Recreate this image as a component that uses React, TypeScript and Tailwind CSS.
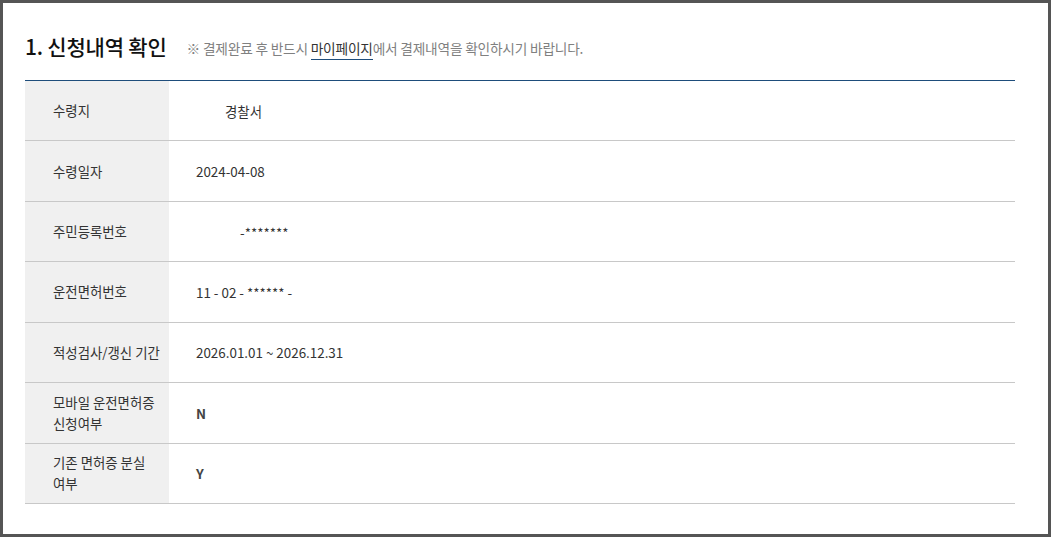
import React from "react";

const rows: { label: React.ReactNode; value: React.ReactNode; valueClass?: string }[] = [
  { label: "수령지", value: <span className="pl-[29px]">경찰서</span> },
  { label: "수령일자", value: "2024-04-08" },
  { label: "주민등록번호", value: <span className="pl-[44px]">-*******</span> },
  { label: "운전면허번호", value: "11 - 02 - ****** -" },
  { label: "적성검사/갱신 기간", value: "2026.01.01 ~ 2026.12.31" },
  {
    label: (
      <>
        모바일 운전면허증
        <br />
        신청여부
      </>
    ),
    value: "N",
    valueClass: "font-bold text-[#444]",
  },
  {
    label: (
      <>
        기존 면허증 분실
        <br />
        여부
      </>
    ),
    value: "Y",
    valueClass: "font-bold text-[#444]",
  },
];

export default function App() {
  return (
    <div
      className="w-[1051px] h-[537px] bg-[#555555] pt-[3px] pl-[3px] pr-[3px] pb-[3px]"
      style={{ fontFamily: '"Noto Sans CJK KR", "Noto Sans", sans-serif' }}
    >
      <div className="w-full h-full bg-white pl-[22px] pr-[33px] pt-[26px]">
        <div className="flex items-end h-[32px]">
          <h2 className="text-[21px] leading-[30px] text-[#111] font-medium tracking-[-0.2px]">
            1. 신청내역 확인
          </h2>
          <p className="ml-[20px] mb-[3px] text-[13.7px] leading-[20px] text-[#808080] tracking-[-0.2px]">
            ※ 결제완료 후 반드시{" "}
            <span className="text-[#333] border-b border-[#1e4d7b] pb-[1px]">마이페이지</span>
            에서 결제내역을 확인하시기 바랍니다.
          </p>
        </div>
        <div className="mt-[19px] border-t border-[#1e4d7b]">
          {rows.map((r, i) => (
            <div key={i} className="flex h-[60.43px] border-b border-[#c8c8c8] text-[13.4px] text-[#333]">
              <div className="w-[144px] bg-[#f0f0f0] flex items-center pl-[28px] leading-[21px]">
                <span>{r.label}</span>
              </div>
              <div className={`flex items-center pl-[27px] ${r.valueClass ?? ""}`}>{r.value}</div>
            </div>
          ))}
        </div>
      </div>
    </div>
  );
}
